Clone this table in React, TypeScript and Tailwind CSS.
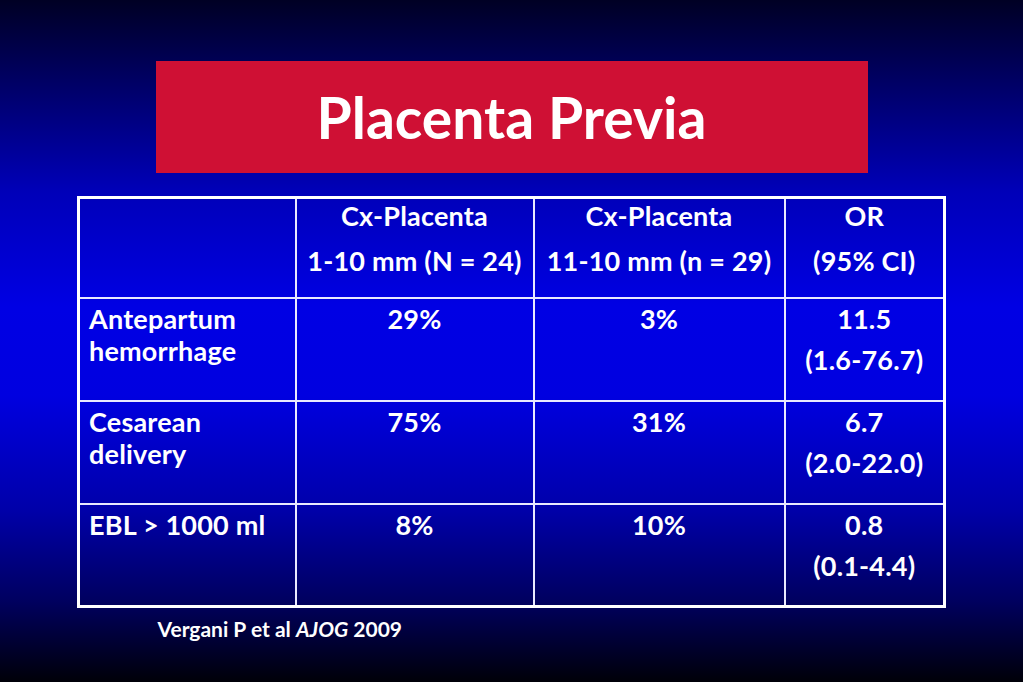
const rows = [
  { label: "Antepartum hemorrhage", a: "29%", b: "3%", or: "11.5", ci: "(1.6-76.7)" },
  { label: "Cesarean delivery", a: "75%", b: "31%", or: "6.7", ci: "(2.0-22.0)" },
  { label: "EBL > 1000 ml", a: "8%", b: "10%", or: "0.8", ci: "(0.1-4.4)" },
];

const headers = [
  ["Cx-Placenta", "1-10 mm (N = 24)"],
  ["Cx-Placenta", "11-10 mm (n = 29)"],
  ["OR", "(95% CI)"],
];

export default function App() {
  return (
    <div
      className="flex h-[682px] w-[1023px] flex-col items-center overflow-hidden bg-[linear-gradient(to_bottom,#000024_0%,#00005a_10%,#0000b8_28%,#0000e4_45%,#0000e0_58%,#0000a8_75%,#000060_88%,#000008_100%)] font-['Lato',sans-serif] font-bold text-white"
    >
      {/* Title */}
      <div className="mt-[61px] flex h-[112px] w-[712px] items-center justify-center bg-[#cf1034]">
        <h1 className="text-[57px] leading-none font-bold">Placenta Previa</h1>
      </div>

      {/* Table */}
      <table className="mt-[23px] w-[866px] table-fixed border-collapse border-[3px] border-white text-[27px] leading-[32px] tracking-[0.2px]">
        <colgroup>
          <col className="w-[217px]" />
          <col className="w-[238px]" />
          <col className="w-[251px]" />
          <col className="w-[160px]" />
        </colgroup>
        <tbody>
          <tr className="h-[100px]">
            <td className="border-2 border-[#e8e8ff]" />
            {headers.map((h, i) => (
              <td
                key={i}
                className="border-2 border-[#e8e8ff] px-0 align-top text-center whitespace-nowrap"
              >
                <div className="leading-[34px]">{h[0]}</div>
                <div className="mt-[11px] leading-[34px]">{h[1]}</div>
              </td>
            ))}
          </tr>
          {rows.map((r) => (
            <tr key={r.label} className="h-[103px]">
              <td className="border-2 border-[#e8e8ff] pr-2 pl-[9px] pt-[4px] align-top">
                {r.label}
              </td>
              <td className="border-2 border-[#e8e8ff] pt-[4px] align-top text-center">{r.a}</td>
              <td className="border-2 border-[#e8e8ff] pt-[4px] align-top text-center">{r.b}</td>
              <td className="border-2 border-[#e8e8ff] pt-[4px] align-top text-center">
                <div>{r.or}</div>
                <div className="mt-[9px]">{r.ci}</div>
              </td>
            </tr>
          ))}
        </tbody>
      </table>

      {/* Source */}
      <p className="mt-[9px] w-[866px] pl-[79px] text-[21px] leading-6">
        Vergani P et al <span className="italic">AJOG</span> 2009
      </p>
    </div>
  );
}
